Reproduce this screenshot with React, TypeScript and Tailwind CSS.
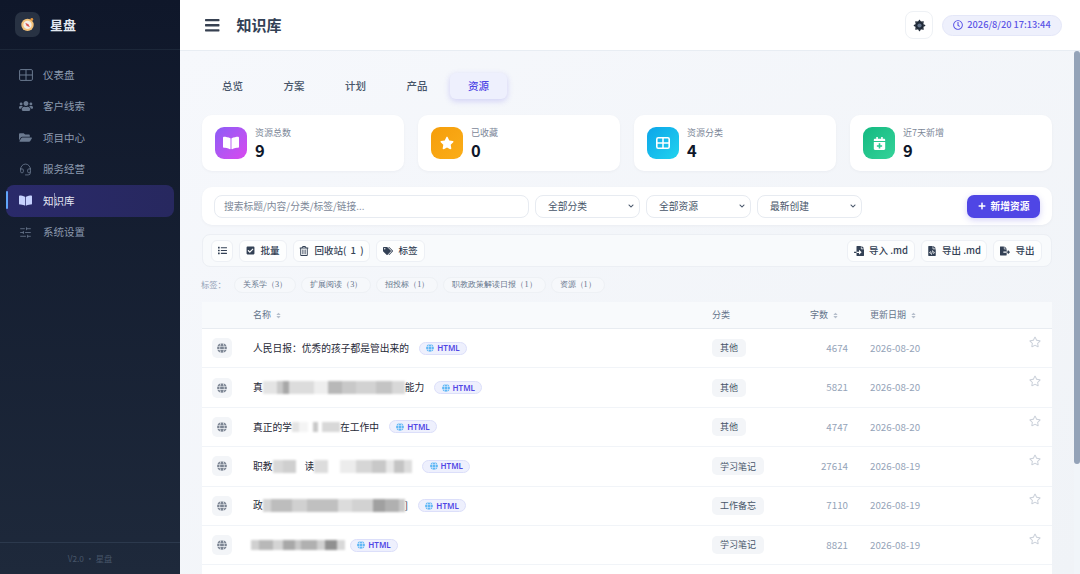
import React from "react";
import {
  FaBars, FaRegClock, FaBookOpen, FaStar, FaCalendarPlus, FaPlus, FaList, FaCheckSquare,
  FaRegTrashAlt, FaTags, FaFileImport, FaFileExport, FaFileCode, FaGlobe, FaRegStar, FaSort,
  FaChevronDown, FaUsers, FaFolderOpen,
} from "react-icons/fa";
import { Headset, SlidersHorizontal } from "lucide-react";

const GridIcon = ({ className = "" }: { className?: string }) => (
  <svg viewBox="0 0 14 12" className={className} fill="none" stroke="currentColor" strokeWidth="1">
    <rect x="0.6" y="0.6" width="12.8" height="10.8" rx="1.2" />
    <path d="M7 .6v10.8M.6 6h12.8" />
  </svg>
);

const SolidGrid = () => (
  <svg viewBox="0 0 14 12" className="w-[14px] h-[12px]" fill="none">
    <rect x="0.8" y="0.8" width="12.4" height="10.4" rx="1.4" stroke="#fff" strokeWidth="1.6" />
    <path d="M7 .8v10.4M.8 6h12.4" stroke="#fff" strokeWidth="1.5" />
  </svg>
);

const Gear = () => (
  <svg viewBox="0 0 16 16" className="w-[13px] h-[13px]">
    {[0, 45, 90, 135, 180, 225, 270, 315].map((a) => (
      <path key={a} d="M6.2 3 L8 .5 L9.8 3 Z" fill="#1f2937" transform={`rotate(${a} 8 8)`} />
    ))}
    <circle cx="8" cy="8" r="5.4" fill="#1f2937" />
    <circle cx="8" cy="8" r="2.6" fill="#64748b" />
  </svg>
);

const Compass = () => (
  <svg viewBox="0 0 16 16" className="w-[15px] h-[15px]">
    <circle cx="8" cy="8.4" r="6.6" fill="#f3c27a" />
    <circle cx="8" cy="8.4" r="4.4" fill="#f4efe6" />
    <path d="M5.6 6 L9 7.6 L10.6 11 L7 9.2 Z" fill="#d9534f" />
    <circle cx="12.6" cy="2.6" r="1.5" fill="#e8963c" />
  </svg>
);

const nav = [
  { label: "仪表盘", icon: <GridIcon className="w-[14px] h-[12px]" /> },
  { label: "客户线索", icon: <FaUsers className="text-[14px]" /> },
  { label: "项目中心", icon: <FaFolderOpen className="text-[13px]" /> },
  { label: "服务经营", icon: <Headset className="w-[13px] h-[13px]" strokeWidth={1.5} /> },
  { label: "知识库", icon: <FaBookOpen className="text-[13px]" />, active: true },
  { label: "系统设置", icon: <SlidersHorizontal className="w-[13px] h-[13px]" strokeWidth={1.5} /> },
];

const stats = [
  { label: "资源总数", value: "9", bg: "bg-gradient-to-br from-[#8b5cf6] to-[#d946ef]", icon: <FaBookOpen className="text-white text-[16px]" /> },
  { label: "已收藏", value: "0", bg: "bg-gradient-to-br from-[#f59e0b] to-[#fbad18]", icon: <FaStar className="text-white text-[14px]" /> },
  { label: "资源分类", value: "4", bg: "bg-gradient-to-br from-[#0ea5e9] to-[#22d3ee]", icon: <SolidGrid /> },
  { label: "近7天新增", value: "9", bg: "bg-gradient-to-br from-[#10b981] to-[#34d399]", icon: <FaCalendarPlus className="text-white text-[13px]" /> },
];

const Patch = ({ w, c, h = 11 }: { w: number; c: string; h?: number }) => (
  <span className="inline-block shrink-0" style={{ width: w, height: h, background: c }} />
);

const Blur = ({ parts, tall }: { parts: [number, string][]; tall?: boolean }) => (
  <span className={`inline-flex items-center blur-[1px] ${tall ? "h-[13px]" : "h-[10px]"}`}>
    {parts.map(([w, c], i) => <Patch key={i} w={w} c={c} h={tall ? 13 : 10} />)}
  </span>
);

const rows: { name: React.ReactNode; cat: string; words: string; date: string }[] = [
  { name: <span>{"人民日报\uFF1A优秀的孩子都是管出来的"}</span>, cat: "其他", words: "4674", date: "2026-08-20" },
  {
    name: <span className="flex items-center"><span>真</span><Blur tall parts={[[14, "#e4e4e4"], [6, "#c9c9c9"], [6, "#a8a8a8"], [25, "#dcdcdc"], [14, "#eeeeee"], [14, "#b8b8b8"], [14, "#c8c8c8"], [20, "#d2d2d2"], [16, "#c4c4c4"], [13, "#d8d8d8"]]} /><span>能力</span></span>,
    cat: "其他", words: "5821", date: "2026-08-20",
  },
  {
    name: <span className="flex items-center"><span>真正的学</span><Blur parts={[[7, "#e4e4e4"], [9, "#f4f4f4"], [5, "#ffffff"], [5, "#c8c8c8"], [4, "#ffffff"], [18, "#d8d8d8"]]} /><span>在工作中</span></span>,
    cat: "其他", words: "4747", date: "2026-08-20",
  },
  {
    name: <span className="flex items-center"><span>职教</span><Blur tall parts={[[10, "#d8d8d8"], [13, "#cfcfcf"], [9, "#ffffff"]]} /><span>读</span><Blur tall parts={[[14, "#dcdcdc"], [12, "#ffffff"], [16, "#ececec"], [16, "#d6d6d6"], [14, "#c8c8c8"], [8, "#e8e8e8"], [10, "#c4c4c4"], [8, "#dddddd"]]} /></span>,
    cat: "学习笔记", words: "27614", date: "2026-08-19",
  },
  {
    name: <span className="flex items-center"><span>政</span><Blur tall parts={[[8, "#d4d4d4"], [21, "#bdbdbd"], [15, "#d0d0d0"], [31, "#c0c0c0"], [14, "#dcdcdc"], [21, "#d2d2d2"], [12, "#a0a0a0"], [14, "#b0b0b0"], [6, "#c8c8c8"]]} /><span>]</span></span>,
    cat: "工作备忘", words: "7110", date: "2026-08-19",
  },
  {
    name: <Blur parts={[[8, "#d0d0d0"], [14, "#b8b8b8"], [10, "#d4d4d4"], [12, "#a8a8a8"], [6, "#c8c8c8"], [16, "#b0b0b0"], [8, "#d0d0d0"], [12, "#909090"], [8, "#d8d8d8"]]} />,
    cat: "学习笔记", words: "8821", date: "2026-08-19",
  },
  { name: <span></span>, cat: "", words: "", date: "" },
];

const tags = ["关系学\uFF083\uFF09", "扩展阅读\uFF083\uFF09", "招投标\uFF081\uFF09", "职教政策解读日报\uFF081\uFF09", "资源\uFF081\uFF09"];

const Sel = ({ label, w }: { label: string; w: string }) => (
  <div className={`${w} h-[23px] flex items-center justify-between pl-[12px] pr-[5px] bg-white border border-[#e7ebf1] rounded-[8px] text-[9.75px] text-[#475569]`}>
    <span>{label}</span>
    <FaChevronDown className="text-[6px] text-[#475569]" />
  </div>
);

const ToolBtn = ({ w, icon, label }: { w: string; icon: React.ReactNode; label?: string }) => (
  <div className={`${w} h-[22px] flex items-center justify-center gap-[5px] bg-white/70 border border-[#edf0f5] rounded-[6px] text-[9.5px] font-medium text-[#334155] whitespace-pre`}>
    {icon}
    {label && <span>{label}</span>}
  </div>
);

const grid = "grid grid-cols-[51px_459px_88px_48px_1fr] items-center";

export default function App() {
  return (
    <div className="flex h-[574px] w-[1080px] overflow-hidden bg-[#f1f5f9] font-['Noto_Sans_CJK_SC','Noto_Sans',sans-serif]">
      <aside className="w-[180px] shrink-0 h-full flex flex-col bg-gradient-to-b from-[#0f172a] to-[#1e293b]">
        <div className="h-[50px] shrink-0 flex items-center pl-[15px] gap-[10px] border-b border-[#1c2739]">
          <div className="w-[25px] h-[25px] rounded-[7px] bg-[#283243] flex items-center justify-center"><Compass /></div>
          <span className="text-[13px] font-semibold text-[#e2e8f0]">星盘</span>
        </div>
        <nav className="flex-1 pt-[9px] flex flex-col">
          {nav.map((n) => (
            <div key={n.label} className={`relative h-[31.5px] mx-[6px] flex items-center rounded-[8px] text-[10.5px] ${n.active ? "bg-gradient-to-r from-[#2a2a6a] to-[#27285f] text-[#e6e9f5]" : "text-[#8c9aae]"}`}>
              {n.active && <span className="absolute left-0 top-[6px] h-[18px] w-[2px] rounded bg-[#60a5fa]" />}
              {n.active && <span className="absolute left-[48px] top-[8px] h-[15px] w-px bg-[#8a90b8]" />}
              <span className={`w-[37px] pl-[13px] shrink-0 flex items-center ${n.active ? "text-[#c7d2fe]" : "text-[#6b7a90]"}`}>{n.icon}</span>
              <span>{n.label}</span>
            </div>
          ))}
        </nav>
        <div className="h-[32px] shrink-0 flex items-center justify-center border-t border-[#2c394d] text-[8.25px] text-[#475569]">V2.0 · 星盘</div>
      </aside>

      <div className="flex-1 min-w-0 h-full flex flex-col">
        <header className="h-[51px] shrink-0 bg-white border-b border-[#e8edf3] flex items-center pl-[24px] pr-[18px]">
          <FaBars className="text-[16.5px] text-[#374151]" />
          <h1 className="ml-[16px] mt-[1px] text-[15px] font-semibold text-[#334155]">知识库</h1>
          <div className="ml-auto flex items-center gap-[9px]">
            <div className="w-[28px] h-[28px] rounded-[8px] bg-white border border-[#eef1f5] flex items-center justify-center">
              <Gear />
            </div>
            <div className="h-[21px] w-[120px] rounded-full bg-[#eef0fc] border border-[#e4e7f8] flex items-center justify-center gap-[4px] text-[9.25px] font-medium text-[#5b54e6]">
              <FaRegClock className="text-[10px]" />
              <span>2026/8/20 17:13:44</span>
            </div>
          </div>
        </header>

        <div className="flex-1 min-h-0 flex">
          <main className="flex-1 min-w-0 overflow-hidden pl-[22px] pr-[22px] bg-gradient-to-br from-[#f6f8fc] to-[#f0f3f7]">
            <div className="mt-[22px] ml-[2px] flex gap-[4.5px]">
              {["总览", "方案", "计划", "产品", "资源"].map((t) => (
                <div key={t} className={`w-[57px] h-[26px] flex items-center justify-center rounded-[6px] text-[10.5px] font-medium ${t === "资源" ? "bg-[#eef0fd] text-[#4f46e5] shadow-[0_2px_6px_rgba(79,70,229,0.22)]" : "text-[#475569]"}`}>{t}</div>
              ))}
            </div>

            <div className="mt-[16px] grid grid-cols-4 gap-[14px]">
              {stats.map((s) => (
                <div key={s.label} className="h-[56px] bg-white rounded-[10px] shadow-[0_1px_3px_rgba(15,23,42,0.04)] flex items-center pl-[13px] gap-[8px]">
                  <div className={`w-[32px] h-[32px] rounded-[9px] flex items-center justify-center ${s.bg}`}>{s.icon}</div>
                  <div className="flex flex-col">
                    <span className="text-[9px] leading-[14px] text-[#7c8798]">{s.label}</span>
                    <span className="text-[16.5px] leading-[20px] font-semibold text-[#0f172a]">{s.value}</span>
                  </div>
                </div>
              ))}
            </div>

            <div className="mt-[16px] h-[38px] bg-white rounded-[10px] shadow-[0_1px_3px_rgba(15,23,42,0.04)] flex items-center pl-[12px] pr-[12px]">
              <div className="w-[315px] h-[23px] flex items-center pl-[9px] bg-white border border-[#e7ebf1] rounded-[8px] text-[9.75px] text-[#7c8798]">搜索标题/内容/分类/标签/链接...</div>
              <div className="ml-[6px] flex gap-[6px]">
                <Sel label="全部分类" w="w-[105px]" />
                <Sel label="全部资源" w="w-[105px]" />
                <Sel label="最新创建" w="w-[105px]" />
              </div>
              <div className="ml-auto w-[73px] h-[23px] rounded-[7px] bg-[#4f46e5] shadow-[0_2px_6px_rgba(79,70,229,0.25)] flex items-center justify-center gap-[5px] text-[9.75px] font-semibold text-white">
                <FaPlus className="text-[8px]" />
                <span>新增资源</span>
              </div>
            </div>

            <div className="mt-[9px] h-[33px] bg-[#f8fafc] border border-[#eceff4] rounded-[8px] flex items-center pl-[8px] pr-[9px]">
              <div className="flex gap-[6px]">
                <ToolBtn w="w-[22px]" icon={<FaList className="text-[9px]" />} />
                <ToolBtn w="w-[48px]" icon={<FaCheckSquare className="text-[9px]" />} label="批量" />
                <ToolBtn w="w-[77px]" icon={<FaRegTrashAlt className="text-[10px]" />} label="回收站(  1  )" />
                <ToolBtn w="w-[49px]" icon={<FaTags className="text-[10px]" />} label="标签" />
              </div>
              <div className="ml-auto flex gap-[6px]">
                <ToolBtn w="w-[68px]" icon={<FaFileImport className="text-[10px]" />} label="导入 .md" />
                <ToolBtn w="w-[66px]" icon={<FaFileCode className="text-[10px]" />} label="导出 .md" />
                <ToolBtn w="w-[49px]" icon={<FaFileExport className="text-[10px]" />} label="导出" />
              </div>
            </div>

            <div className="mt-[10px] -ml-[1px] h-[16px] flex items-center text-[8.25px] text-[#94a3b8]">
              <span className="w-[33px] -mt-[1px]">{"标签\uFF1A"}</span>
              <div className="flex gap-[5px]">
                {tags.map((t) => (
                  <span key={t} className="h-[16px] px-[8px] flex items-center rounded-full bg-[#f6f8fb] border border-[#eef1f5] text-[#64748b] font-['Liberation_Serif',serif]">{t}</span>
                ))}
              </div>
            </div>

            <div className="mt-[9px] bg-white rounded-t-[8px]">
              <div className={`${grid} h-[27px] bg-[#f8fafc] border-b border-[#e8ecf1] text-[9px] text-[#64748b]`}>
                <span />
                <span className="flex items-center gap-[4px]">名称<FaSort className="text-[7px] text-[#b6bfcc]" /></span>
                <span>分类</span>
                <span className="pl-[10px] flex items-center gap-[4px]">字数<FaSort className="text-[7px] text-[#b6bfcc]" /></span>
                <span className="pl-[22px] flex items-center gap-[4px]">更新日期<FaSort className="text-[7px] text-[#b6bfcc]" /></span>
              </div>
              {rows.map((r, i) => (
                <div key={i} className={`${grid} h-[39.4px] border-b border-[#f1f4f8]`}>
                  <span className="pl-[10px]">
                    <span className="w-[20px] h-[20px] rounded-[5px] bg-[#f3f5f8] flex items-center justify-center">
                      <FaGlobe className="text-[10px] text-[#7c8593]" />
                    </span>
                  </span>
                  <span className={`flex items-center text-[9.75px] text-[#1f2937] ${i === 5 ? "-ml-[2px] gap-[5px]" : "gap-[10px]"}`}>
                    {r.name}
                    {i < 6 && (
                      <span className="w-[48px] h-[13px] rounded-full bg-[#eef0fd] border border-[#dcdffa] flex items-center justify-center gap-[3px] text-[8px] font-semibold text-[#4f46e5] font-['Noto_Sans',sans-serif]">
                        <FaGlobe className="text-[8px] text-[#60b8f5]" />HTML
                      </span>
                    )}
                  </span>
                  <span className="flex">
                    {r.cat && <span className="h-[18px] px-[8px] flex items-center rounded-[5px] bg-[#f3f5f8] text-[9px] text-[#475569]">{r.cat}</span>}
                  </span>
                  <span className="text-right text-[9.75px] text-[#94a3b8]">{r.words}</span>
                  <span className="pl-[22px] pr-[12px] relative flex items-center text-[9.75px] text-[#94a3b8]">
                    {r.date}
                    {r.date !== "" && <FaRegStar className="absolute right-[11px] -top-[5px] text-[12px] text-[#cbd1da]" />}
                  </span>
                </div>
              ))}
            </div>
          </main>
          <div className="w-[6px] shrink-0 bg-[#f1f5f9]">
            <div className="h-[413px] w-full rounded-full bg-[#94a3b8]" />
          </div>
        </div>
      </div>
    </div>
  );
}
